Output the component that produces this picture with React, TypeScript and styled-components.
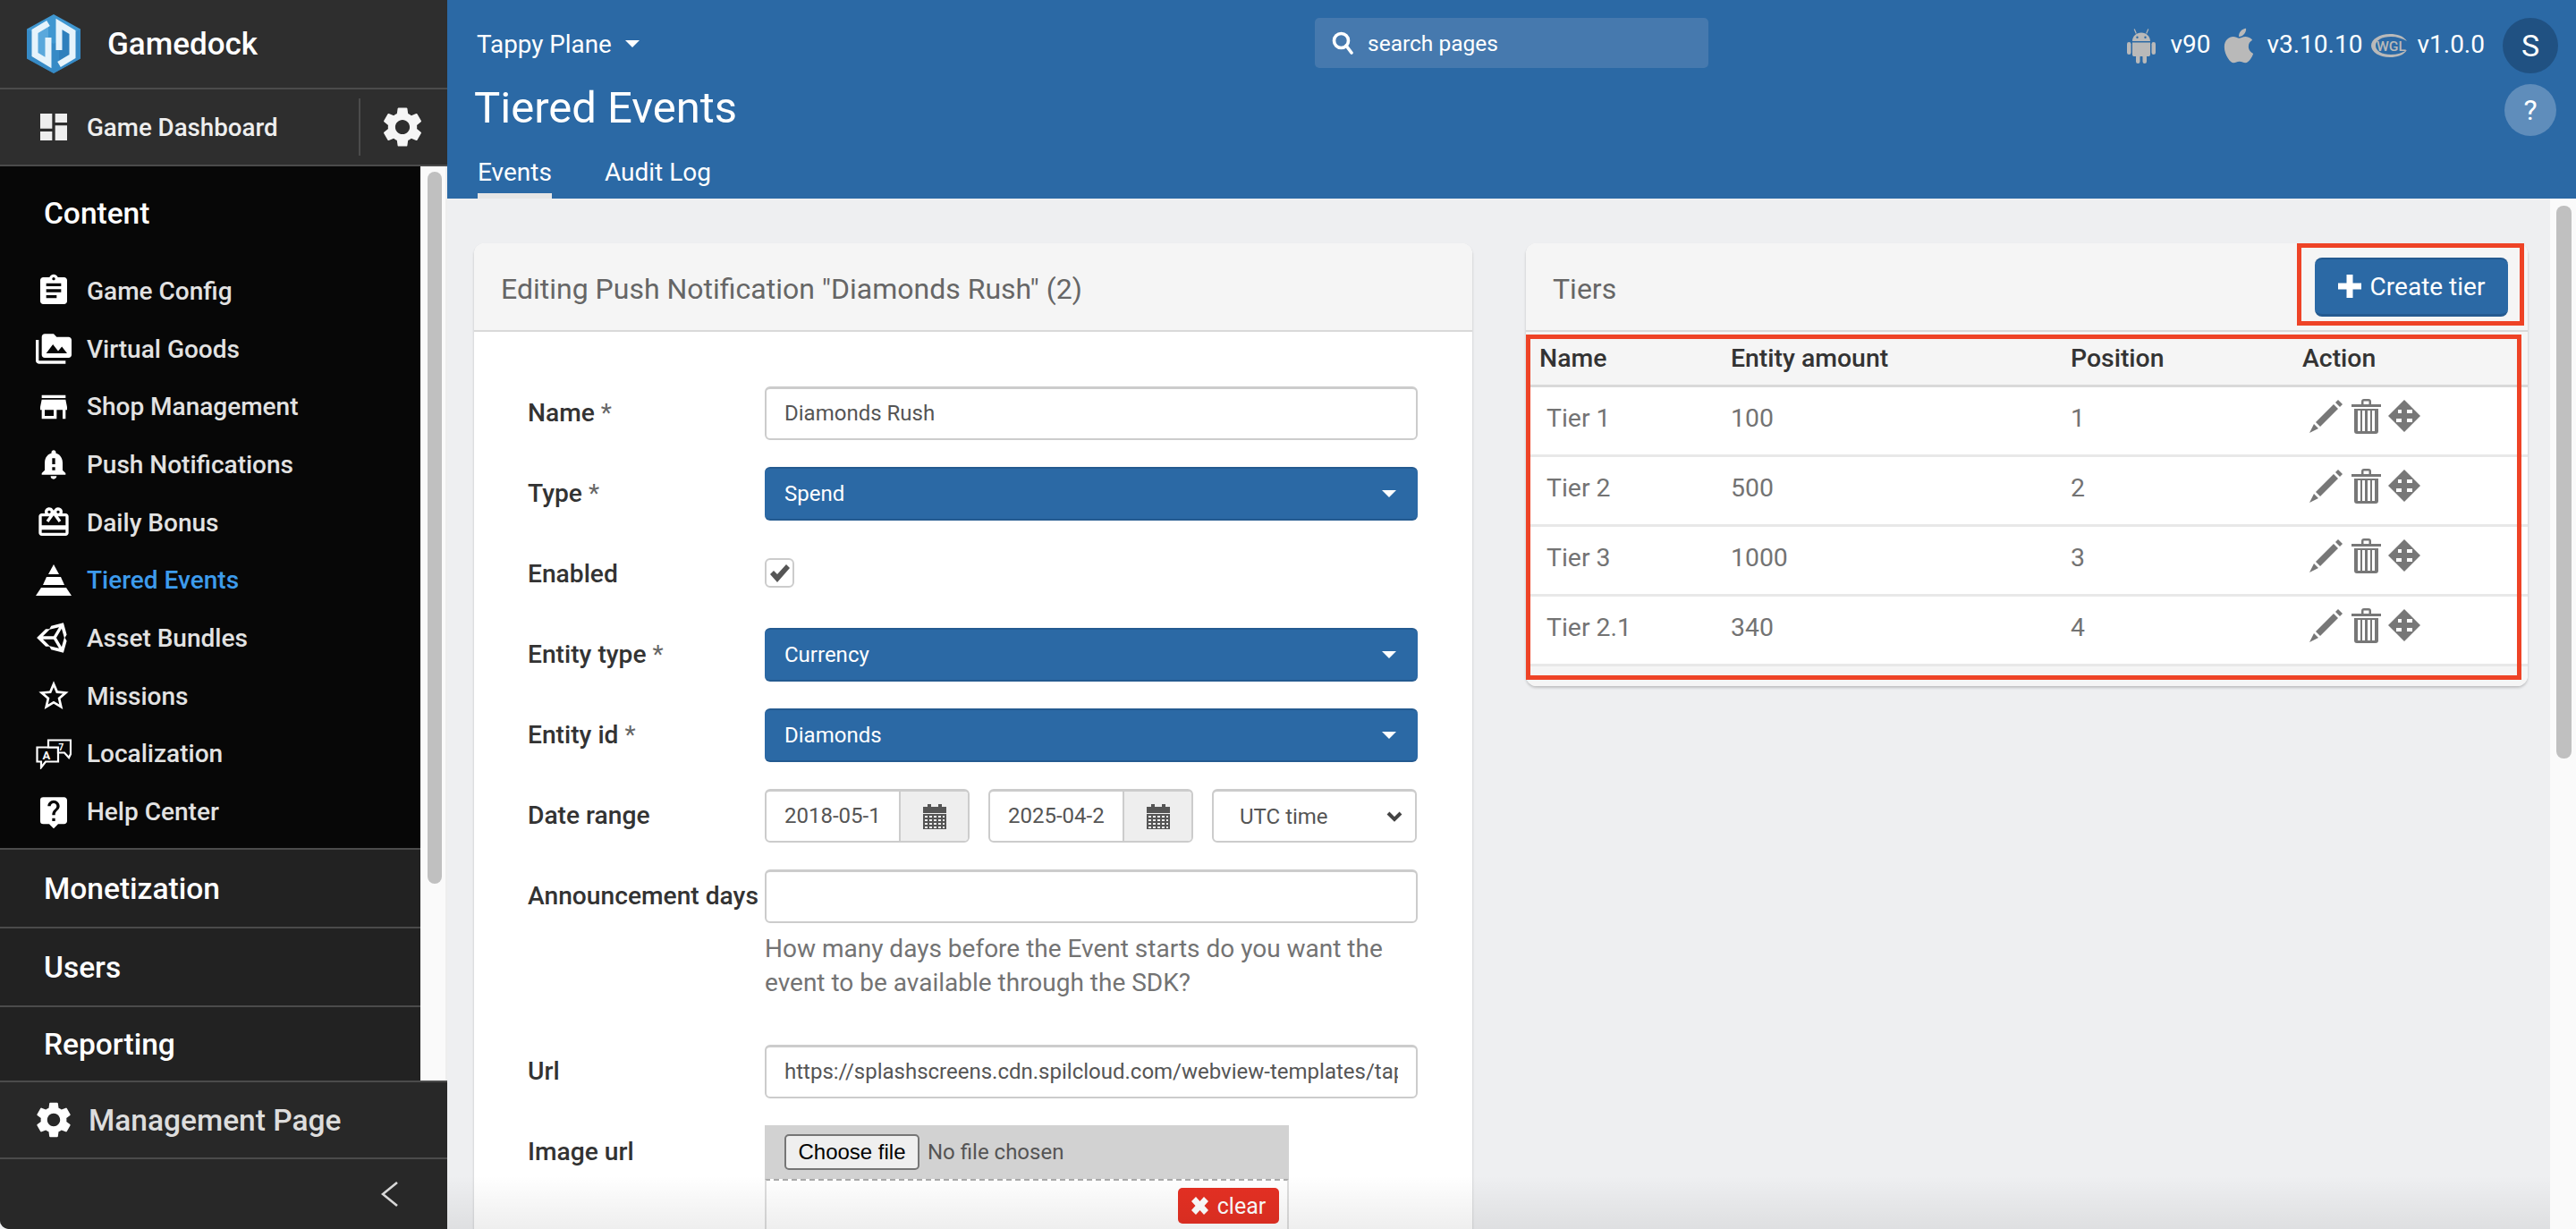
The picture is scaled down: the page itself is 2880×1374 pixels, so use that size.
import React from "react";
import styled, { createGlobalStyle } from "styled-components";
import { FaApple, FaUnity } from "react-icons/fa";
import {
  MdDashboard,
  MdSettings,
  MdAssignment,
  MdPermMedia,
  MdStore,
  MdNotificationImportant,
  MdRedeem,
  MdStarBorder,
  MdLiveHelp,
} from "react-icons/md";

const Global = createGlobalStyle`
  html, body { margin: 0; padding: 0; height: 100%; overflow: hidden; background: #eeeff1; }
  #root { height: 100%; }
  * { box-sizing: border-box; }
  body { font-family: Roboto, "Noto Sans", sans-serif; color: #666; }
`;

const Shell = styled.div`
  display: flex;
  height: 1374px;
  width: 2880px;
  overflow: hidden;
  position: relative;
`;

/* ---------- sidebar ---------- */
const Sidebar = styled.aside`
  width: 500px;
  flex: none;
  display: flex;
  flex-direction: column;
  background: #2e2e2e;
  border-bottom-left-radius: 10px;
  overflow: hidden;
`;
const Brand = styled.div`
  height: 100px;
  flex: none;
  display: flex;
  align-items: center;
  padding-left: 30px;
  gap: 30px;
  border-bottom: 2px solid #4b4b4b;
  color: #fff;
  font-size: 35px;
  font-weight: 500;
`;
const DashRow = styled.div`
  height: 86px;
  flex: none;
  display: flex;
  align-items: center;
  border-bottom: 2px solid #4b4b4b;
`;
const DashLink = styled.div`
  flex: 1;
  display: flex;
  align-items: center;
  gap: 17px;
  padding-left: 40px;
  color: #eee;
  font-size: 27.7px;
  font-weight: 500;
  svg { flex: none; }
`;
const GearCell = styled.div`
  width: 99px;
  height: 64px;
  flex: none;
  display: flex;
  align-items: center;
  justify-content: center;
  border-left: 2px solid #4b4b4b;
  padding-right: 3px;
  color: #f5f5f5;
`;
const NavWrap = styled.div`
  height: 1022px;
  flex: none;
  display: flex;
`;
const NavCol = styled.div`
  width: 470px;
  flex: none;
  display: flex;
  flex-direction: column;
`;
const Open = styled.div`
  height: 762px;
  flex: none;
  background: #070707;
  padding-top: 27px;
`;
const SectionTitle = styled.div`
  color: #fff;
  font-size: 33.5px;
  font-weight: 500;
  padding-left: 49px;
  line-height: 52px;
  margin-bottom: 28px;
`;
const NavItem = styled.div<{ $active?: boolean }>`
  height: 64.7px;
  display: flex;
  align-items: center;
  color: ${(p) => (p.$active ? "#3d9bec" : "#e2e2e2")};
  font-size: 28px;
  font-weight: 500;
`;
const NavIcon = styled.span`
  width: 40px;
  height: 40px;
  margin-left: 40px;
  margin-right: 17px;
  flex: none;
  display: flex;
  align-items: center;
  justify-content: center;
  color: #fff;
`;
const Section = styled.div<{ $h: number }>`
  height: ${(p) => p.$h}px;
  flex: none;
  background: #222;
  border-top: 2px solid #4b4b4b;
  color: #fff;
  font-size: 33.5px;
  font-weight: 500;
  display: flex;
  align-items: center;
  padding-left: 49px;
`;
const Track = styled.div<{ $w: number; $pad: number }>`
  width: ${(p) => p.$w}px;
  flex: none;
  background: #fafafa;
  border-right: 2px solid #eee;
  padding-left: ${(p) => p.$pad}px;
`;
const Thumb = styled.div<{ $top: number; $h: number; $w: number }>`
  width: ${(p) => p.$w}px;
  height: ${(p) => p.$h}px;
  margin-top: ${(p) => p.$top}px;
  background: #c0c0c0;
  border-radius: 8px;
`;
const Manage = styled.div`
  height: 88px;
  flex: none;
  background: #282828;
  border-top: 2px solid #4b4b4b;
  border-bottom: 2px solid #4b4b4b;
  display: flex;
  align-items: center;
  gap: 15px;
  padding-left: 36px;
  color: #ddd;
  font-size: 33.5px;
  font-weight: 500;
  svg { color: #fff; }
`;
const Collapse = styled.div`
  flex: 1;
  background: #282828;
  display: flex;
  align-items: center;
  justify-content: flex-end;
  padding-right: 54px;
`;

/* ---------- main ---------- */
const Main = styled.main`
  flex: 1;
  min-width: 0;
  display: flex;
  flex-direction: column;
`;
const Header = styled.header`
  height: 222px;
  flex: none;
  background: #2b69a5;
  padding: 20px 20px 0 30px;
  display: flex;
  flex-direction: column;
  color: #fff;
`;
const TopBar = styled.div`
  height: 62px;
  display: grid;
  grid-template-columns: 940px 440px 1fr;
  align-items: start;
`;
const GameSelect = styled.div`
  display: flex;
  align-items: center;
  gap: 15px;
  height: 58px;
  padding-left: 3px;
  font-size: 27.8px;
`;
const Caret = styled.span<{ $color?: string }>`
  width: 0;
  height: 0;
  border-left: 8px solid transparent;
  border-right: 8px solid transparent;
  border-top: 8px solid ${(p) => p.$color || "#fff"};
  flex: none;
`;
const Search = styled.div`
  height: 56px;
  border-radius: 5px;
  background: #4679ae;
  display: flex;
  align-items: center;
  gap: 16px;
  padding-left: 19px;
  font-size: 24.5px;
`;
const Versions = styled.div`
  justify-self: end;
  display: flex;
  align-items: center;
  height: 62px;
  font-size: 28px;
  svg { flex: none; }
`;
const Ver = styled.span<{ $gap: number; $right: number }>`
  margin: 0 ${(p) => p.$right}px 4px ${(p) => p.$gap}px;
`;
const Avatar = styled.div`
  width: 62px;
  height: 62px;
  border-radius: 50%;
  background: #205182;
  display: flex;
  align-items: center;
  justify-content: center;
  font-size: 34px;
`;
const TitleRow = styled.div`
  display: flex;
  justify-content: space-between;
  height: 80px;
  margin-top: -1px;
`;
const Title = styled.h1`
  margin: 0;
  font-size: 49px;
  line-height: 80px;
  font-weight: 400;
`;
const HelpBtn = styled.div`
  width: 58px;
  height: 58px;
  border-radius: 50%;
  background: #5f8dbb;
  display: flex;
  align-items: center;
  justify-content: center;
  font-size: 32px;
  margin: 13px 2px 0 0;
`;
const Tabs = styled.nav`
  display: flex;
  gap: 59px;
  padding-left: 4px;
  margin-top: -7px;
`;
const Tab = styled.div<{ $active?: boolean }>`
  height: 68px;
  padding-top: 19px;
  line-height: 40px;
  font-size: 28px;
  border-bottom: 6px solid ${(p) => (p.$active ? "#e6e6e6" : "transparent")};
`;
const Body = styled.div`
  flex: 1;
  min-height: 0;
  display: flex;
  position: relative;
`;
const Content = styled.div`
  flex: 1;
  min-width: 0;
  overflow: hidden;
  background: #eeeff1;
  padding: 50px 25px 0 30px;
  display: grid;
  grid-template-columns: 1116px 1120px;
  column-gap: 60px;
  align-items: start;
`;
const MainTrack = styled(Track)`
  border-right: 0;
`;
const Fade = styled.div`
  position: absolute;
  left: 0;
  right: 29px;
  bottom: 0;
  height: 60px;
  background: linear-gradient(to bottom, rgba(0, 0, 0, 0), rgba(0, 0, 0, 0.065));
  pointer-events: none;
`;
const Card = styled.section`
  background: #fff;
  border-radius: 12px;
  box-shadow: 0 2px 3px rgba(0, 0, 0, 0.2);
  position: relative;
`;
const CardHead = styled.div`
  height: 99px;
  background: #f5f5f5;
  border-bottom: 2px solid #d9d9d9;
  border-radius: 12px 12px 0 0;
  display: flex;
  align-items: center;
  justify-content: space-between;
  padding: 0 22px 0 30px;
  font-size: 32px;
  color: #666;
`;
const HeadText = styled.span`
  padding-top: 5px;
`;
const Form = styled.div`
  padding: 61px 61px 0 60px;
  height: 1020px;
  overflow: hidden;
`;
const Row = styled.div<{ $mb?: number }>`
  display: grid;
  grid-template-columns: 265px 1fr;
  margin-bottom: ${(p) => (p.$mb === undefined ? 30 : p.$mb)}px;
`;
const Label = styled.label`
  font-size: 28.2px;
  font-weight: 500;
  color: #333;
  line-height: 60px;
  white-space: nowrap;
  em {
    font-style: normal;
    font-weight: 400;
    color: #666;
  }
`;
const TextInput = styled.div`
  height: 60px;
  border: 2px solid #ccc;
  border-top-width: 3px;
  border-radius: 6px;
  background: #fff;
  padding: 0 20px;
  line-height: 54px;
  font-size: 24px;
  color: #555;
  min-width: 0;
`;
const InputValue = styled.div`
  white-space: nowrap;
  overflow: hidden;
`;
const BlueSelect = styled.div`
  height: 60px;
  border-radius: 6px;
  background: #2b69a5;
  border-top: 2px solid #245a90;
  border-bottom: 2px solid #245a90;
  color: #fff;
  font-size: 24px;
  padding: 0 24px 0 22px;
  display: flex;
  align-items: center;
  justify-content: space-between;
`;
const CheckCell = styled.div`
  height: 60px;
`;
const CheckBox = styled.div`
  width: 33px;
  height: 33px;
  margin-top: 12px;
  border: 2px solid #ccc;
  border-radius: 6px;
  display: flex;
  align-items: center;
  justify-content: center;
`;
const DateRow = styled.div`
  display: grid;
  grid-template-columns: 229px 229px 229px;
  column-gap: 21px;
`;
const DateGroup = styled.div`
  display: flex;
  height: 60px;
  border: 2px solid #ccc;
  border-top-width: 3px;
  border-radius: 6px;
  overflow: hidden;
`;
const DateValue = styled.div`
  width: 148px;
  flex: none;
  padding-left: 20px;
  line-height: 54px;
  font-size: 24px;
  color: #555;
`;
const DateAddon = styled.div`
  flex: 1;
  background: #eee;
  border-left: 2px solid #ccc;
  display: flex;
  align-items: center;
  justify-content: center;
`;
const TimeSelect = styled(DateGroup)`
  padding: 0 14px 0 29px;
  align-items: center;
  justify-content: space-between;
  font-size: 24px;
  color: #555;
`;
const Help = styled.p`
  margin: 10px 0 0;
  font-size: 28px;
  line-height: 38px;
  color: #737373;
`;
const FileBar = styled.div`
  height: 60px;
  width: 586px;
  background: #d2d2d2;
  display: flex;
  align-items: center;
  padding-left: 22px;
  gap: 9px;
  font-size: 24px;
  color: #555;
`;
const FileButton = styled.button`
  height: 40px;
  width: 151px;
  font: 400 24px "Liberation Sans", Arial, sans-serif;
  color: #000;
  background: #efefef;
  border: 2px solid #767676;
  border-radius: 5px;
  padding: 0;
`;
const Preview = styled.div`
  width: 586px;
  height: 120px;
  border: 2px solid #ddd;
  border-top: 2px dashed #aaa;
  border-radius: 0 0 6px 6px;
  display: flex;
  justify-content: flex-end;
  padding: 8px 9px 0 0;
`;
const ClearBtn = styled.button`
  height: 40px;
  width: 113px;
  background: #e53023;
  border: 0;
  border-radius: 5px;
  color: #fff;
  font: 400 25px Roboto, sans-serif;
  display: flex;
  align-items: center;
  justify-content: center;
  gap: 10px;
  padding: 0;
`;
const PrimaryBtn = styled.button`
  height: 66px;
  width: 216px;
  background: #2b69a5;
  border: 0;
  border-top: 2px solid #245a90;
  border-bottom: 3px solid #245a90;
  border-radius: 8px;
  color: #fff;
  font: 400 28px Roboto, sans-serif;
  display: flex;
  align-items: center;
  justify-content: center;
  gap: 10px;
  padding: 0;
`;
const Table = styled.table`
  width: 100%;
  border-collapse: collapse;
  table-layout: fixed;
  font-size: 28.4px;
  border-bottom: 3px solid #d9d9d9;
`;
const THead = styled.th<{ $w: number }>`
  width: ${(p) => p.$w}px;
  height: 60px;
  text-align: left;
  padding: 0 0 0 15px;
  font-weight: 500;
  color: #333;
  background: #f5f5f5;
  border-bottom: 3px solid #d9d9d9;
`;
const Cell = styled.td<{ $first?: boolean }>`
  height: 78px;
  padding: 0 0 5px ${(p) => (p.$first ? 23 : 15)}px;
  color: #737373;
  border-bottom: 3px solid #e8e8e8;
`;
const Actions = styled.div`
  display: flex;
  align-items: center;
  gap: 8px;
  margin: 0 0 5px 8px;
`;
const TableFoot = styled.div`
  height: 22px;
  background: #f5f5f5;
  border-radius: 0 0 12px 12px;
`;
const Annotation = styled.div<{ $l: number; $t: number; $w: number; $h: number }>`
  position: absolute;
  left: ${(p) => p.$l}px;
  top: ${(p) => p.$t}px;
  width: ${(p) => p.$w}px;
  height: ${(p) => p.$h}px;
  border: 5px solid #ee4326;
  pointer-events: none;
`;

/* ---------- drawings ---------- */
const Logo = () => (
  <svg width="60" height="66" viewBox="0 0 60 66">
    <path d="M30 0 60 16.5V49.5L30 66 0 49.5V16.5Z" fill="#3f97d1" />
    <path d="M30 33 60 16.5V49.5L30 66 0 49.5V16.5Z" fill="#2f80bd" opacity=".55" />
    <path d="M24 10 9 19V45L24 54V26Z" fill="#5aa8dc" />
    <path d="M36 56 51 47V20L36 11V40Z" fill="#2f80bd" />
    <path d="M24 10 9 19V45L24 54V26" fill="none" stroke="#e6f3fb" strokeWidth="7" />
    <path d="M36 56 51 47V20L36 11V40" fill="none" stroke="#e6f3fb" strokeWidth="7" />
  </svg>
);

const Pyramid = () => (
  <svg width="40" height="36" viewBox="0 0 40 36" fill="#fff">
    <path d="M20 0 26 11H14Z" />
    <path d="M12 14H28L32 23H8Z" />
    <path d="M6 26H34L40 35H0Z" />
  </svg>
);

const Translate = () => (
  <svg width="40" height="34" viewBox="0 0 40 34" fill="none" stroke="#fff" strokeWidth="2.2">
    <path d="M1.500 9.500H25V25.500H11L6 32V25.500H1.500Z" fill="#070707" />
    <path d="M14 1.500H39V17L37 21 32 15.500H25V9.500H14Z" fill="#070707" />
    <text x="7.500" y="23" fontSize="13" fontWeight="700" fill="#fff" stroke="none" fontFamily="Roboto, sans-serif">A</text>
    <text x="25.500" y="13" fontSize="10" fontWeight="700" fill="#fff" stroke="none" fontFamily="Roboto, sans-serif">7</text>
  </svg>
);

const Chevron = () => (
  <svg width="20" height="28" viewBox="0 0 20 28" fill="none" stroke="#d8d8d8" strokeWidth="2.6">
    <path d="M18 1 2 14 18 27" />
  </svg>
);

const SearchIcon = () => (
  <svg width="24" height="26" viewBox="0 0 24 26" fill="none" stroke="#fff" strokeWidth="3.600">
    <circle cx="10.500" cy="10.500" r="8" />
    <path d="M16 16 22 24" strokeLinecap="round" />
  </svg>
);

const Android = () => (
  <svg width="32" height="39" viewBox="0 0 32 39" fill="#b9b9b9">
    <path d="M6 14C6 8.500 10.500 4.500 16 4.500S26 8.500 26 14ZM11.500 8.500a1.200 1.200 0 1 0 0 2.400 1.200 1.200 0 0 0 0-2.400ZM20.500 8.500a1.200 1.200 0 1 0 0 2.400 1.200 1.200 0 0 0 0-2.400Z" fillRule="evenodd" />
    <path d="M10.300 5.500 8.200.500M21.700 5.500 23.800.500" stroke="#b9b9b9" strokeWidth="1.200" />
    <path d="M6 15.500H26V29C26 30.500 25 31 24 31H8C7 31 6 30.500 6 29Z" />
    <rect x="0" y="15" width="4.500" height="14" rx="2.250" />
    <rect x="27.500" y="15" width="4.500" height="14" rx="2.250" />
    <rect x="10" y="29" width="4.500" height="10" rx="2.250" />
    <rect x="17.500" y="29" width="4.500" height="10" rx="2.250" />
  </svg>
);

const Wgl = () => (
  <svg width="40" height="26" viewBox="0 0 40 26">
    <path d="M40 8C36 2 29 0 21 0 9 0 0 6 0 13c0 7 9 13 21 13 8 0 15-2 19-8-5 3-11 5-18 5C12 23 5 19 5 13 5 7 12 3 22 3c7 0 13 2 18 5Z" fill="#b9b9b9" />
    <text x="6" y="18.500" fontSize="15" fontWeight="500" textLength="33" lengthAdjust="spacingAndGlyphs" fontFamily="Roboto, sans-serif" fill="#b9b9b9">WGL</text>
  </svg>
);

const Pencil = () => (
  <svg width="39" height="37" viewBox="0 0 39 37" fill="#777">
    <path d="M32 0 37 5 34 8 29 3Z" />
    <path d="M27 5 32 10 12 30 7 25Z" />
    <path d="M5 27 10 32 0 37Z" />
  </svg>
);
const Trash = () => (
  <svg width="33" height="39" viewBox="0 0 33 39" fill="#777">
    <path d="M0 6H11V3C11 1 12 0 14 0H19C21 0 22 1 22 3V6H33V9H0ZM13.500 6H19.500V2.500H13.500Z" fillRule="evenodd" />
    <path d="M3 11H30V36C30 38 29 39 27 39H6C4 39 3 38 3 36ZM7 13V36H10V13ZM12 13V36H15V13ZM18 13V36H21V13ZM23 13V36H26V13Z" fillRule="evenodd" />
  </svg>
);
const Move = () => (
  <svg width="36" height="36" viewBox="0 0 36 36">
    <path d="M18 0 36 18 18 36 0 18Z" fill="#777" />
    <path d="M9 11H15V15H11V11ZM21 11H27V15H21ZM9 21H15V25H9ZM21 21H27V25H21Z" fill="#fff" />
  </svg>
);
const Calendar = () => (
  <svg width="26" height="28" viewBox="0 0 26 28" fill="#555">
    <path d="M5 0H9V3H17V0H21V3H26V10H0V3H5Z" />
    <path d="M0 11H26V28H0ZM2 13V15H5V13ZM7 13V15H10V13ZM12 13V15H15V13ZM17 13V15H20V13ZM22 13V15H24V13ZM2 17V19H5V17ZM7 17V19H10V17ZM12 17V19H15V17ZM17 17V19H20V17ZM22 17V19H24V17ZM2 21V23H5V21ZM7 21V23H10V21ZM12 21V23H15V21ZM17 21V23H20V21ZM22 21V23H24V21ZM2 25V27H5V25ZM7 25V27H10V25ZM12 25V27H15V25ZM17 25V27H20V25ZM22 25V27H24V25Z" fillRule="evenodd" />
  </svg>
);
const Check = () => (
  <svg width="22" height="20" viewBox="0 0 22 20" fill="#555">
    <path d="M0 11 4 7 8 11 18 0 22 4 8 20Z" />
  </svg>
);
const Cross = () => (
  <svg width="19" height="20" viewBox="0 0 19 20" fill="#fff">
    <path d="M5 0 9.500 5 14 0 19 5 14.500 10 19 15 14 20 9.500 15 5 20 0 15 4.500 10 0 5Z" />
  </svg>
);
const Plus = () => (
  <svg width="26" height="26" viewBox="0 0 26 26" fill="#fff">
    <path d="M9.500 0H16.500V9.500H26V16.500H16.500V26H9.500V16.500H0V9.500H9.500Z" />
  </svg>
);
const SelectChevron = () => (
  <svg width="18" height="12" viewBox="0 0 18 12" fill="none" stroke="#444" strokeWidth="4">
    <path d="M2 2 9 9 16 2" />
  </svg>
);

const navItems: { label: string; icon: React.ReactNode; active?: boolean }[] = [
  { label: "Game Config", icon: <MdAssignment size={40} /> },
  { label: "Virtual Goods", icon: <MdPermMedia size={40} /> },
  { label: "Shop Management", icon: <MdStore size={40} /> },
  { label: "Push Notifications", icon: <MdNotificationImportant size={40} /> },
  { label: "Daily Bonus", icon: <MdRedeem size={40} /> },
  { label: "Tiered Events", icon: <Pyramid />, active: true },
  { label: "Asset Bundles", icon: <FaUnity size={40} /> },
  { label: "Missions", icon: <MdStarBorder size={40} /> },
  { label: "Localization", icon: <Translate /> },
  { label: "Help Center", icon: <MdLiveHelp size={40} /> },
];

const tiers = [
  { name: "Tier 1", amount: "100", pos: "1" },
  { name: "Tier 2", amount: "500", pos: "2" },
  { name: "Tier 3", amount: "1000", pos: "3" },
  { name: "Tier 2.1", amount: "340", pos: "4" },
];

export default function App() {
  return (
    <Shell>
      <Global />
      <Sidebar>
        <Brand>
          <Logo />
          Gamedock
        </Brand>
        <DashRow>
          <DashLink>
            <MdDashboard size={40} />
            Game Dashboard
          </DashLink>
          <GearCell>
            <MdSettings size={54} />
          </GearCell>
        </DashRow>
        <NavWrap>
          <NavCol>
            <Open>
              <SectionTitle>Content</SectionTitle>
              {navItems.map((n) => (
                <NavItem key={n.label} $active={n.active}>
                  <NavIcon>{n.icon}</NavIcon>
                  {n.label}
                </NavItem>
              ))}
            </Open>
            <Section $h={88}>Monetization</Section>
            <Section $h={88}>Users</Section>
            <Section $h={84}>Reporting</Section>
          </NavCol>
          <Track $w={30} $pad={8}>
            <Thumb $top={6} $h={796} $w={16} />
          </Track>
        </NavWrap>
        <Manage>
          <MdSettings size={48} />
          Management Page
        </Manage>
        <Collapse>
          <Chevron />
        </Collapse>
      </Sidebar>
      <Main>
        <Header>
          <TopBar>
            <GameSelect>
              Tappy Plane <Caret />
            </GameSelect>
            <Search>
              <SearchIcon />
              search pages
            </Search>
            <Versions>
              <Android />
              <Ver $gap={16} $right={10}>v90</Ver>
              <FaApple size={44} color="#b9b9b9" />
              <Ver $gap={9} $right={10}>v3.10.10</Ver>
              <Wgl />
              <Ver $gap={11} $right={20}>v1.0.0</Ver>
              <Avatar>S</Avatar>
            </Versions>
          </TopBar>
          <TitleRow>
            <Title>Tiered Events</Title>
            <HelpBtn>?</HelpBtn>
          </TitleRow>
          <Tabs>
            <Tab $active>Events</Tab>
            <Tab>Audit Log</Tab>
          </Tabs>
        </Header>
        <Body>
          <Content>
            <Card>
              <CardHead>
                <HeadText>Editing Push Notification "Diamonds Rush" (2)</HeadText>
              </CardHead>
              <Form>
                <Row>
                  <Label>Name <em>*</em></Label>
                  <TextInput><InputValue>Diamonds Rush</InputValue></TextInput>
                </Row>
                <Row>
                  <Label>Type <em>*</em></Label>
                  <BlueSelect>Spend <Caret /></BlueSelect>
                </Row>
                <Row>
                  <Label>Enabled</Label>
                  <CheckCell>
                    <CheckBox><Check /></CheckBox>
                  </CheckCell>
                </Row>
                <Row>
                  <Label>Entity type <em>*</em></Label>
                  <BlueSelect>Currency <Caret /></BlueSelect>
                </Row>
                <Row>
                  <Label>Entity id <em>*</em></Label>
                  <BlueSelect>Diamonds <Caret /></BlueSelect>
                </Row>
                <Row>
                  <Label>Date range</Label>
                  <DateRow>
                    <DateGroup>
                      <DateValue>2018-05-1</DateValue>
                      <DateAddon><Calendar /></DateAddon>
                    </DateGroup>
                    <DateGroup>
                      <DateValue>2025-04-2</DateValue>
                      <DateAddon><Calendar /></DateAddon>
                    </DateGroup>
                    <TimeSelect>UTC time <SelectChevron /></TimeSelect>
                  </DateRow>
                </Row>
                <Row $mb={50}>
                  <Label>Announcement days</Label>
                  <div>
                    <TextInput />
                    <Help>How many days before the Event starts do you want the event to be available through the SDK?</Help>
                  </div>
                </Row>
                <Row>
                  <Label>Url</Label>
                  <TextInput>
                    <InputValue>https://splashscreens.cdn.spilcloud.com/webview-templates/tap</InputValue>
                  </TextInput>
                </Row>
                <Row>
                  <Label>Image url</Label>
                  <div>
                    <FileBar>
                      <FileButton>Choose file</FileButton>
                      No file chosen
                    </FileBar>
                    <Preview>
                      <ClearBtn><Cross /> clear</ClearBtn>
                    </Preview>
                  </div>
                </Row>
              </Form>
            </Card>
            <Card>
              <CardHead>
                <HeadText>Tiers</HeadText>
                <PrimaryBtn><Plus /> Create tier</PrimaryBtn>
              </CardHead>
              <Table>
                <thead>
                  <tr>
                    <THead $w={214}>Name</THead>
                    <THead $w={380}>Entity amount</THead>
                    <THead $w={259}>Position</THead>
                    <THead $w={267}>Action</THead>
                  </tr>
                </thead>
                <tbody>
                  {tiers.map((t) => (
                    <tr key={t.name}>
                      <Cell $first>{t.name}</Cell>
                      <Cell>{t.amount}</Cell>
                      <Cell>{t.pos}</Cell>
                      <Cell>
                        <Actions>
                          <Pencil />
                          <Trash />
                          <Move />
                        </Actions>
                      </Cell>
                    </tr>
                  ))}
                </tbody>
              </Table>
              <TableFoot />
              <Annotation $l={862} $t={0} $w={254} $h={92} />
              <Annotation $l={0} $t={102} $w={1113} $h={386} />
            </Card>
          </Content>
          <MainTrack $w={29} $pad={7}>
            <Thumb $top={8} $h={618} $w={17} />
          </MainTrack>
          <Fade />
        </Body>
      </Main>
    </Shell>
  );
}
